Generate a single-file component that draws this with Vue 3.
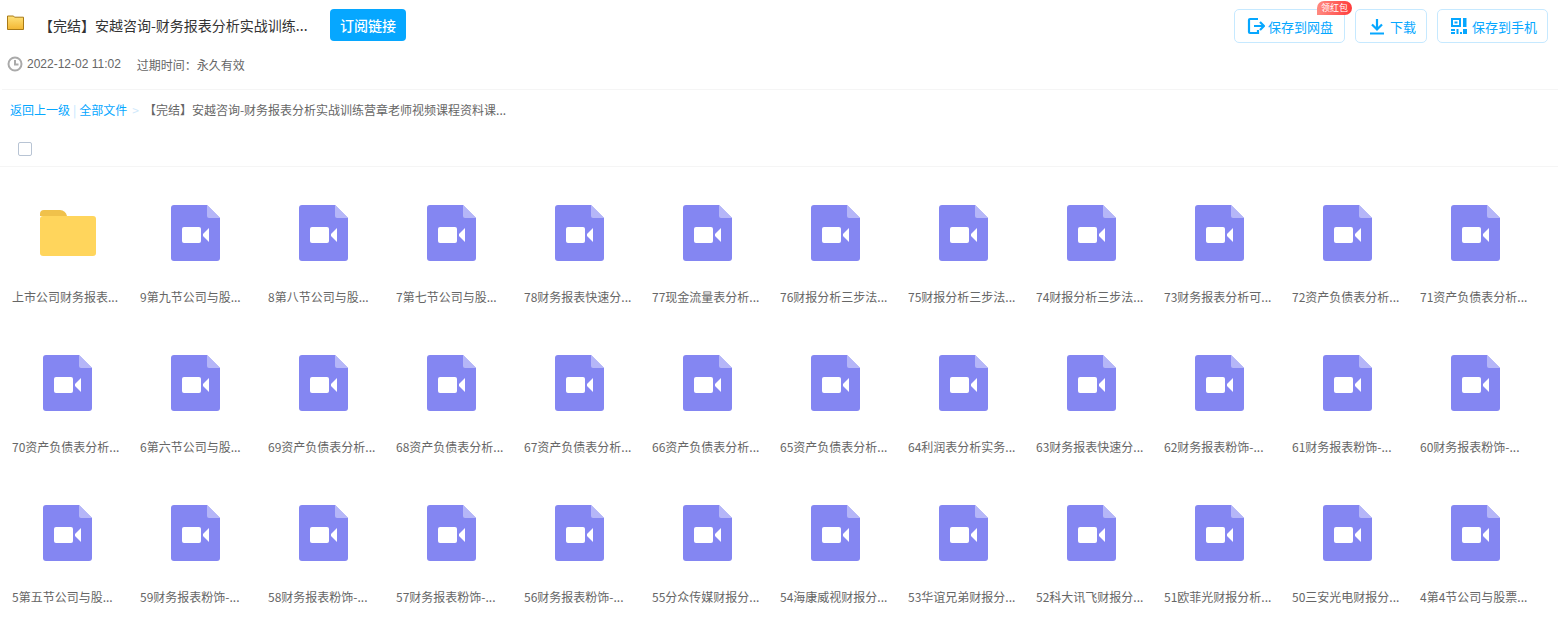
<script setup>
const files = [
  '上市公司财务报表...', '9第九节公司与股...', '8第八节公司与股...', '7第七节公司与股...',
  '78财务报表快速分...', '77现金流量表分析...', '76财报分析三步法...', '75财报分析三步法...',
  '74财报分析三步法...', '73财务报表分析可...', '72资产负债表分析...', '71资产负债表分析...',
  '70资产负债表分析...', '6第六节公司与股...', '69资产负债表分析...', '68资产负债表分析...',
  '67资产负债表分析...', '66资产负债表分析...', '65资产负债表分析...', '64利润表分析实务...',
  '63财务报表快速分...', '62财务报表粉饰-...', '61财务报表粉饰-...', '60财务报表粉饰-...',
  '5第五节公司与股...', '59财务报表粉饰-...', '58财务报表粉饰-...', '57财务报表粉饰-...',
  '56财务报表粉饰-...', '55分众传媒财报分...', '54海康威视财报分...', '53华谊兄弟财报分...',
  '52科大讯飞财报分...', '51欧菲光财报分析...', '50三安光电财报分...', '4第4节公司与股票...'
]
</script>

<template>
  <div class="page">
    <header class="head">
      <div class="head-left">
        <div class="title-row">
          <svg class="title-folder" width="17" height="15" viewBox="0 0 17 15">
            <defs>
              <linearGradient id="tf" x1="0" y1="0" x2="0" y2="1">
                <stop offset="0" stop-color="#ffe27a" />
                <stop offset="1" stop-color="#f2b632" />
              </linearGradient>
            </defs>
            <path d="M.5 1h6l1 1.2h9v12.3H.5z" fill="url(#tf)" stroke="#a97a16" />
          </svg>
          <h1 class="title">【完结】安越咨询-财务报表分析实战训练...</h1>
          <button class="subscribe">订阅链接</button>
        </div>
        <div class="meta">
          <svg width="16" height="16" viewBox="0 0 16 16" fill="none" stroke="#aaa" stroke-width="2">
            <circle cx="8" cy="8" r="6.500" />
            <path d="M8 4v4.500h3.500" />
          </svg>
          <span class="date">2022-12-02 11:02</span>
          <span>过期时间：永久有效</span>
        </div>
      </div>
      <div class="actions">
        <button class="action save">
          <span class="badge">领红包</span>
          <svg width="18" height="18" viewBox="0 0 18 18" fill="none" stroke="#06a7ff" stroke-width="2.200">
            <path d="M11 2H3a1 1 0 0 0-1 1v12a1 1 0 0 0 1 1h8v-3M7 9h9.500M13 5l4 4-4 4" />
          </svg>
          保存到网盘
        </button>
        <button class="action">
          <svg width="16" height="17" viewBox="0 0 16 17" fill="none" stroke="#06a7ff" stroke-width="2.200">
            <path d="M8 1v10M3 6.500 8 11.500 13 6.500M1 15.500h14" />
          </svg>
          下载
        </button>
        <button class="action">
          <svg width="16" height="16" viewBox="0 0 16 16" fill="#06a7ff">
            <path d="M0 0h10v9H0zM2 2v5h6V2zM3.500 3.500h3v2h-3zM12 0h3.500v9H12zM0 11h4v2H0zM0 14h4v2H0zM5.500 11h2v5h-2zM9 14h2v2H9zM12 11h4v5h-4z" fill-rule="evenodd" />
          </svg>
          保存到手机
        </button>
      </div>
    </header>

    <nav class="crumbs">
      <a>返回上一级</a>
      <span class="sep">|</span>
      <a>全部文件</a>
      <span class="arrow">&gt;</span>
      <span class="current">【完结】安越咨询-财务报表分析实战训练营章老师视频课程资料课...</span>
    </nav>

    <div class="select-bar">
      <span class="checkbox"></span>
    </div>

    <ul class="grid">
      <li v-for="(name, i) in files" :key="i" class="item">
        <div class="icon">
          <svg v-if="i === 0" class="folder" width="56" height="46" viewBox="0 0 56 46">
            <path d="M0 4a4 4 0 0 1 4-4h16a8 8 0 0 1 7 6h-27z" fill="#f0c14b" />
            <rect y="6" width="56" height="40" rx="3" fill="#ffd55c" />
          </svg>
          <svg v-else width="49" height="56" viewBox="0 0 49 56">
            <path d="M3 0h33l13 13v40a3 3 0 0 1-3 3H3a3 3 0 0 1-3-3V3a3 3 0 0 1 3-3z" fill="#8486f2" />
            <path d="M36 0l13 13H38a2 2 0 0 1-2-2z" fill="#b5b6f8" />
            <rect x="11" y="22" width="19" height="16" rx="2" fill="#fff" />
            <path d="M32 29l6-6v14l-6-6z" fill="#fff" />
          </svg>
        </div>
        <p class="name">{{ name }}</p>
      </li>
    </ul>
  </div>
</template>

<style>
body {
  margin: 0;
  background: #fff;
}
</style>

<style scoped>
.page {
  font-family: "Noto Sans CJK SC", "Liberation Sans", sans-serif;
  font-size: 12px;
  color: #666;
  height: 630px;
  overflow: hidden;
}

.head {
  display: flex;
  justify-content: space-between;
  align-items: flex-start;
  padding: 9px 10px 0 5px;
  height: 80px;
  margin-left: 2px;
  border-bottom: 1px solid #f5f5f5;
}

.title-row {
  display: flex;
  align-items: center;
  height: 32px;
}

.title-folder {
  margin-top: -6px;
}

.title {
  margin: 0 0 0 15px;
  width: 291px;
  font-size: 14px;
  font-weight: 400;
  color: #333;
  white-space: nowrap;
}

.subscribe {
  width: 76px;
  height: 32px;
  border: 0;
  border-radius: 4px;
  background: #06a7ff;
  color: #fff;
  font: inherit;
  font-size: 14px;
  font-weight: 500;
  padding: 0;
}

.meta {
  display: flex;
  align-items: center;
  margin-top: 15px;
  height: 16px;
}

.date {
  margin: 0 16px 0 4px;
  font-family: "Liberation Sans", sans-serif;
}

.actions {
  display: flex;
  gap: 10px;
}

.action {
  position: relative;
  display: flex;
  align-items: center;
  justify-content: center;
  gap: 5px;
  height: 34px;
  padding: 0 10px 0 13px;
  border: 1px solid #c6e9ff;
  border-radius: 5px;
  background: #fff;
  color: #06a7ff;
  font: inherit;
  font-size: 13px;
}

.save {
  gap: 3px;
  padding: 0 11px 0 12px;
}

.badge {
  position: absolute;
  top: -9px;
  right: -8px;
  height: 14px;
  padding: 0 4px;
  line-height: 14px;
  border-radius: 7px 7px 7px 0;
  background: linear-gradient(90deg, #ff8a80, #ff3c3c);
  color: #fff;
  font-size: 9px;
}

.crumbs {
  box-sizing: border-box;
  display: flex;
  align-items: center;
  height: 40px;
  padding: 0 0 2px 10px;
  color: #06a7ff;
}

.sep {
  margin: 0 3px;
  color: #bde6ff;
}

.arrow {
  margin: 0 5px;
  color: #cfe9fb;
}

.current {
  color: #666;
}

.select-bar {
  box-sizing: border-box;
  display: flex;
  align-items: center;
  height: 37px;
  padding: 2px 0 0 18px;
  border-bottom: 1px solid #f5f5f5;
}

.checkbox {
  width: 12px;
  height: 12px;
  border: 1px solid #b8c4d4;
  border-radius: 2px;
}

.grid {
  display: grid;
  grid-template-columns: repeat(12, 128px);
  grid-auto-rows: 150px;
  margin: 0;
  padding: 38px 0 0 3px;
  list-style: none;
}

.item {
  display: flex;
  flex-direction: column;
  align-items: center;
}

.icon {
  display: flex;
  align-items: center;
  justify-content: center;
  width: 100%;
  height: 56px;
}

.folder {
  margin-left: 1px;
}

.name {
  align-self: flex-start;
  margin: 27px 0 0 9px;
  line-height: 18px;
  white-space: nowrap;
}
</style>
